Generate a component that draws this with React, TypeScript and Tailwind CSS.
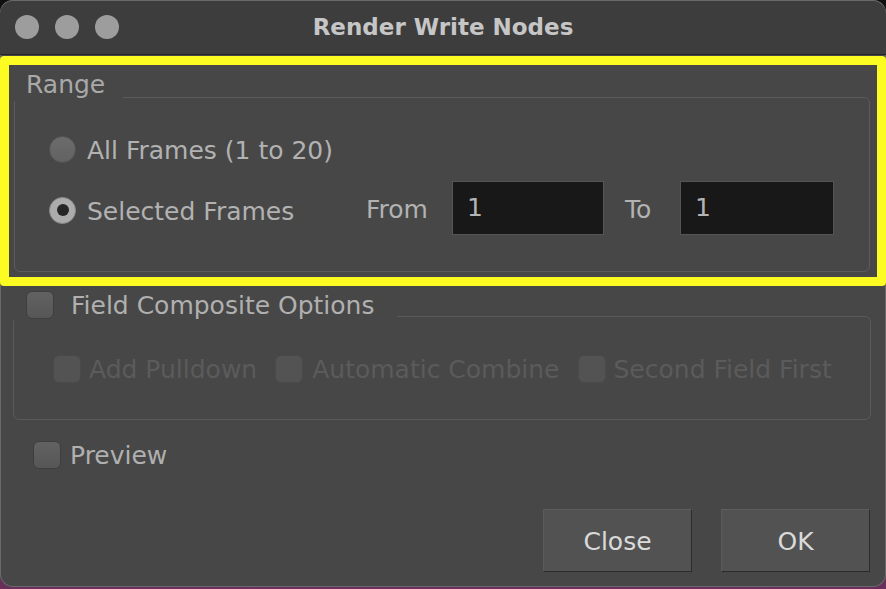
import React from "react";

const font = { fontFamily: '"DejaVu Sans", "Liberation Sans", sans-serif' };

function Checkbox({ disabled }: { disabled?: boolean }) {
  return (
    <span
      className={
        "block w-[28px] h-[28px] shrink-0 rounded-[6px] border " +
        (disabled
          ? "bg-[#535353] border-[#4a4a4a]"
          : "bg-gradient-to-b from-[#626262] to-[#565656] border-[#3e3e3e]")
      }
    />
  );
}

export default function App() {
  return (
    <div
      className="w-[886px] h-[589px] bg-gradient-to-b from-[#101010] via-[#2a1a24] to-[#6a2f5c] overflow-hidden"
      style={font}
    >
      <div className="w-[886px] h-[587px] rounded-[13px] bg-[#474747] shadow-[inset_0_0_0_1px_#6a6a6a] overflow-hidden flex flex-col">
        {/* Title bar */}
        <div className="h-[55px] shrink-0 bg-[#3d3d3d] border-b border-[#262626] rounded-t-[13px] shadow-[inset_0_1px_0_#6a6a6a] flex items-center">
          <div className="flex gap-[16px] pl-[15px]">
            <span className="block w-[24px] h-[24px] rounded-full bg-[#9d9d9d]" />
            <span className="block w-[24px] h-[24px] rounded-full bg-[#9d9d9d]" />
            <span className="block w-[24px] h-[24px] rounded-full bg-[#9d9d9d]" />
          </div>
          <div className="flex-1 text-center pr-[119px] text-[23px] font-bold text-[#c6c6c6] leading-none">
            Render Write Nodes
          </div>
        </div>

        {/* Range (highlighted) */}
        <div className="mt-[1px] h-[230px] border-[9px] border-[#fcfc22] rounded-[4px] flex flex-col">
          <fieldset className="mt-[8px] ml-[5px] mr-[7px] border border-[#5c5c5c] rounded-[6px] pt-[14px] pb-[36px] pl-[34px] min-w-0">
            <legend className="ml-[-34px] pl-[11px] pr-[18px] text-[25px] leading-[24px] pb-[24px] text-[#a9a9a9]">
              Range
            </legend>
            <div className="flex items-center h-[28px]">
              <span className="block w-[27px] h-[27px] rounded-full bg-gradient-to-b from-[#6c6c6c] to-[#626262] border border-[#555]" />
              <span className="ml-[11px] pt-[2px] text-[25px] text-[#b2b2b2] leading-none">All Frames (1 to 20)</span>
            </div>
            <div className="flex items-center h-[54px] mt-[18px]">
              <span className="w-[317px] flex items-center pt-[4px]">
                <span className="flex items-center justify-center w-[27px] h-[27px] rounded-full bg-[#acacac] border border-[#8a8a8a]">
                  <span className="block w-[12px] h-[12px] rounded-full bg-[#262626]" />
                </span>
                <span className="ml-[11px] pt-[2px] text-[25px] text-[#b2b2b2] leading-none">Selected Frames</span>
              </span>
              <span className="w-[86px] pt-[3px] text-[25px] text-[#b2b2b2] leading-none">From</span>
              <span className="w-[152px] h-[54px] bg-[#181818] border border-[#545454] flex items-center pl-[14px] text-[25px] text-[#b4b4b4]">
                1
              </span>
              <span className="w-[76px] pl-[21px] pt-[3px] text-[25px] text-[#b2b2b2] leading-none">To</span>
              <span className="w-[154px] h-[54px] bg-[#181818] border border-[#545454] flex items-center pl-[14px] text-[25px] text-[#b4b4b4]">
                1
              </span>
            </div>
          </fieldset>
        </div>

        {/* Field Composite Options */}
        <fieldset className="mt-[5px] ml-[13px] mr-[15px] border border-[#5a5a5a] rounded-[6px] pt-[14px] pb-[36px] pl-[39px] min-w-0">
          <legend className="ml-[-39px] pl-[12px] pr-[23px] h-[50px] flex items-start">
            <span className="flex items-center h-[28px]">
              <Checkbox />
              <span className="ml-[17px] pt-[1px] text-[25px] text-[#b0b0b0] leading-none">Field Composite Options</span>
            </span>
          </legend>
          <div className="flex items-center h-[28px] text-[25px] text-[#5b5b5b] leading-none">
            <Checkbox disabled />
            <span className="ml-[8px]">Add Pulldown</span>
            <span className="ml-[18px]"><Checkbox disabled /></span>
            <span className="ml-[9px]">Automatic Combine</span>
            <span className="ml-[18px]"><Checkbox disabled /></span>
            <span className="ml-[8px]">Second Field First</span>
          </div>
        </fieldset>

        {/* Preview */}
        <div className="mt-[21px] ml-[33px] flex items-center h-[28px]">
          <Checkbox />
          <span className="ml-[9px] text-[25px] text-[#b0b0b0] leading-none">Preview</span>
        </div>

        {/* Buttons */}
        <div className="mt-[40px] flex justify-end gap-[29px] pr-[16px]">
          <button className="w-[149px] h-[63px] pt-[3px] bg-[#525252] border border-t-[#5e5e5e] border-l-[#5a5a5a] border-r-[#2c2c2c] border-b-[#2a2a2a] text-[25px] text-[#dadada]">
            Close
          </button>
          <button className="w-[149px] h-[63px] pt-[3px] bg-[#525252] border border-t-[#5e5e5e] border-l-[#5a5a5a] border-r-[#2c2c2c] border-b-[#2a2a2a] text-[25px] text-[#dadada]">
            OK
          </button>
        </div>
      </div>
    </div>
  );
}
